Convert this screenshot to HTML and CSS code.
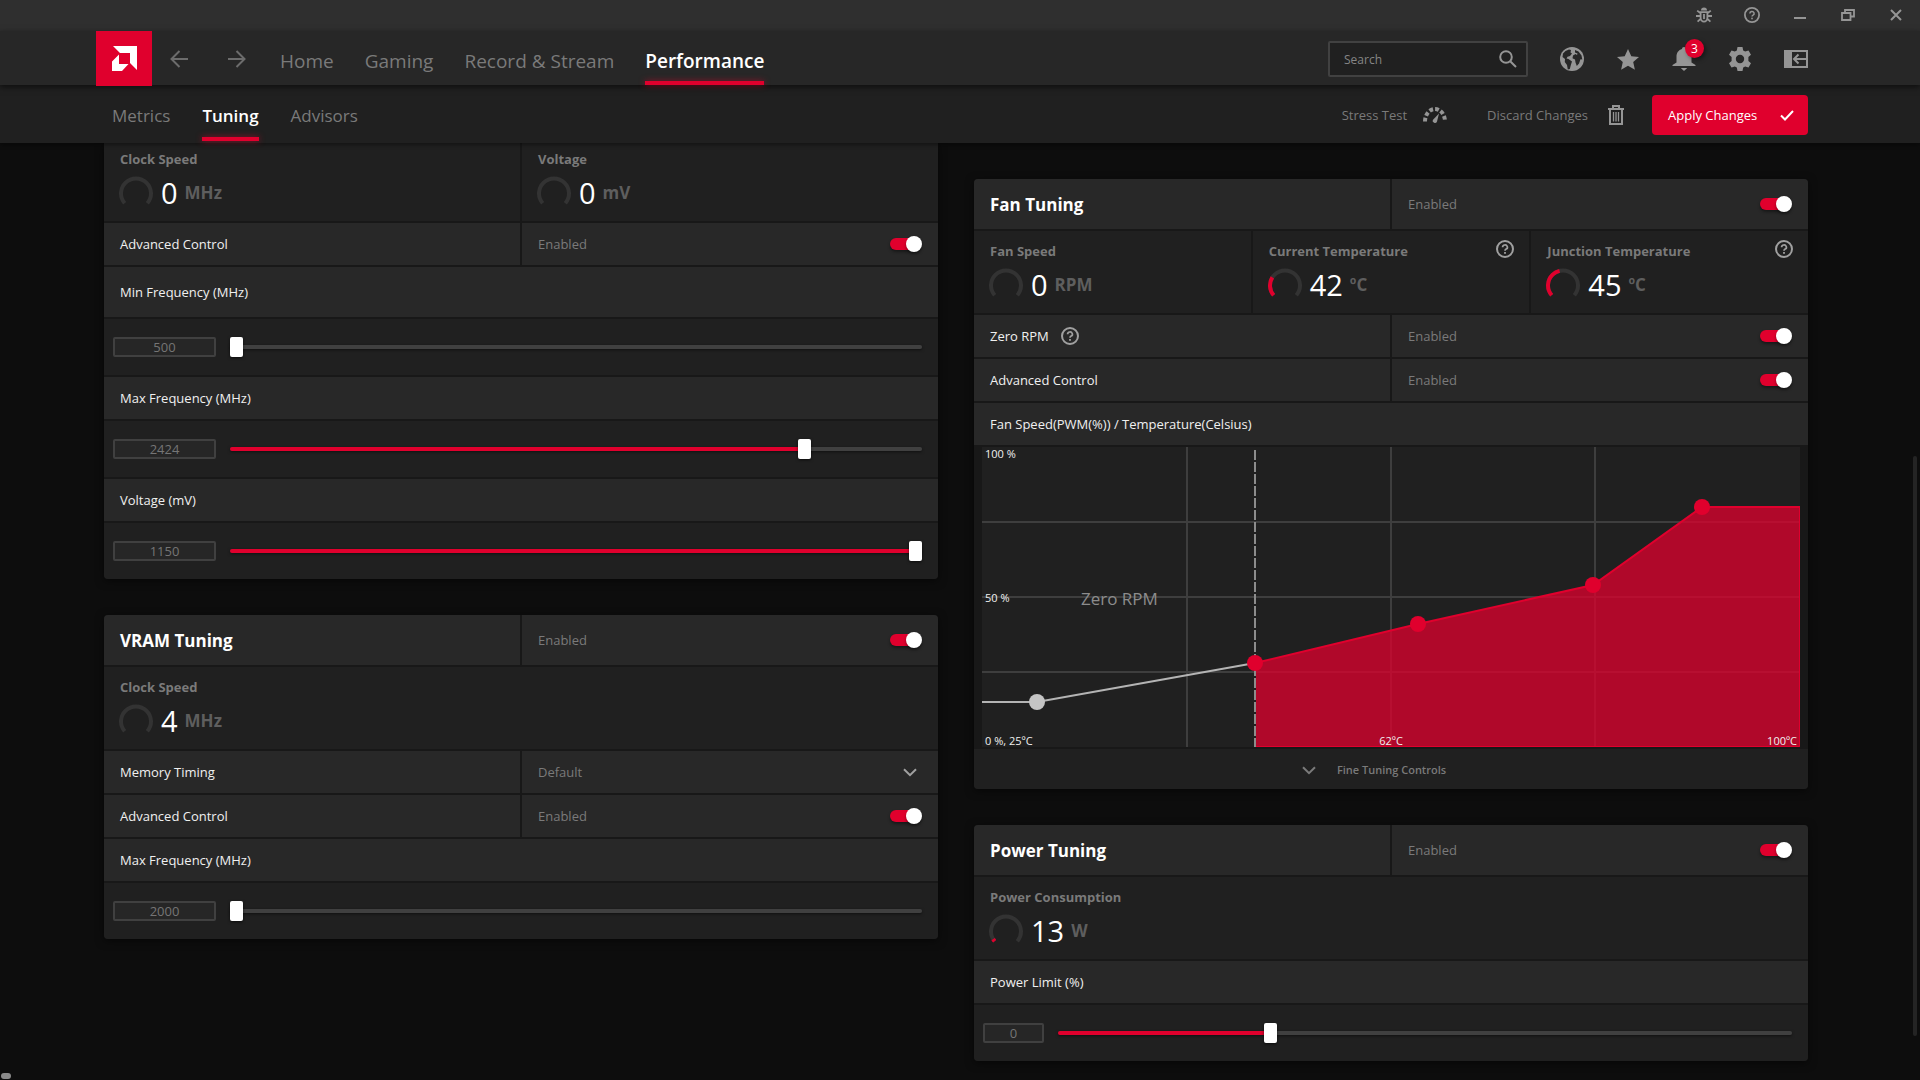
FILE: index.html
```html
<!DOCTYPE html>
<html lang="en">
<head>
<meta charset="utf-8">
<title>Performance Tuning</title>
<link rel="stylesheet" href="styles.css">
</head>
<body>
<svg class="defs" width="0" height="0" aria-hidden="true">
  <symbol id="help" viewBox="0 0 18 18"><circle cx="9" cy="9" r="8" fill="none" stroke="currentColor" stroke-width="2"/><path d="M6.600 7.200a2.400 2.200 0 1 1 3.600 1.900c-.9.5-1.200.8-1.200 1.700" fill="none" stroke="currentColor" stroke-width="1.700"/><rect x="8.100" y="12" width="1.800" height="1.800" fill="currentColor"/></symbol>
  <symbol id="chevron" viewBox="0 0 14 9"><path d="M1 1.200l6 6 6-6" fill="none" stroke="currentColor" stroke-width="2"/></symbol>
</svg>
<div class="app">
  <div class="titlebar">
    <button class="win-btn" aria-label="Report a bug"><svg width="16" height="16" viewBox="0 0 16 16" fill="none" stroke="currentColor" stroke-width="1.800"><path d="M5 3.400a3 3 0 0 1 6 0z" fill="currentColor" stroke="none"/><path d="M4.600 5.200h6.800v5.200a3.400 4.200 0 0 1-6.800 0zM8 7v5M4.600 9H0M16 9h-4.600M4.600 6.200L1.200 3.600M11.400 6.200l3.400-2.600M4.800 11.600L1.600 14.600M11.200 11.600l3.200 3"/></svg></button>
    <button class="win-btn" aria-label="Help"><svg width="16" height="16"><use href="#help"/></svg></button>
    <button class="win-btn" aria-label="Minimize"><svg width="14" height="14" viewBox="0 0 14 14"><path d="M1 10h12" stroke="currentColor" stroke-width="2"/></svg></button>
    <button class="win-btn" aria-label="Restore"><svg width="14" height="12" viewBox="0 0 14 12" fill="none" stroke="currentColor" stroke-width="1.800"><path d="M1 4h8.500v7H1zM4 4V1h9v6.500H9.500"/></svg></button>
    <button class="win-btn" aria-label="Close"><svg width="12" height="12" viewBox="0 0 12 12"><path d="M1 1l10 10M11 1L1 11" stroke="currentColor" stroke-width="2"/></svg></button>
  </div>

  <header class="header">
    <a class="logo" href="#" aria-label="AMD"><svg width="25" height="25" viewBox="0 0 25 25" fill="#fff"><path d="M1 0h24v24l-7-7V7H8z"/><path d="M7 8.500V18h9.500l-6.500 7H0V15.500z"/></svg></a>
    <div class="history">
      <button class="icon-btn" aria-label="Back"><svg width="18" height="18" viewBox="0 0 18 18" fill="none" stroke="currentColor" stroke-width="2"><path d="M18 9H2M9.500 1L1.500 9l8 8"/></svg></button>
      <button class="icon-btn" aria-label="Forward"><svg width="18" height="18" viewBox="0 0 18 18" fill="none" stroke="currentColor" stroke-width="2"><path d="M0 9h16M8.500 1l8 8-8 8"/></svg></button>
    </div>
    <nav class="nav nav-main">
      <a href="#">Home</a><a href="#">Gaming</a><a href="#">Record &amp; Stream</a><a href="#" class="active" aria-current="page">Performance</a>
    </nav>
    <div class="tools">
      <label class="search"><input type="text" placeholder="Search" aria-label="Search"><svg width="18" height="18" viewBox="0 0 18 18" fill="none" stroke="currentColor" stroke-width="2"><circle cx="7" cy="7" r="5.800"/><path d="M11.200 11.200L17 17"/></svg></label>
      <button class="tool" aria-label="Web"><svg width="24" height="24" viewBox="0 0 24 24"><circle cx="12" cy="12" r="12" fill="currentColor"/><g fill="#272727"><path d="M3 6.500L5.500 4l3.500-1.500 2 .5-.5 2.500 1.500 1-2 2.500-2.500.8-1 1.700 2 .5 3.500 2.500-1 3-1.200 4.500-2 .5-.8-4.500-2.200-3L5 12l-2.500-2z"/><path d="M15 3l3.500 1.500 3 4 .8 4-1.800-.3-1.500 4.300-2.200 2.500-1.300-3.500-.5-3-2.500-1.300.5-2.700 2.500-1.500 1.500 1 .5-1.500-2.500-1z"/></g></svg></button>
      <button class="tool" aria-label="Favorites"><svg width="24" height="24" viewBox="0 0 24 24" fill="currentColor"><path d="M12 2l3.300 7.200 7.700.8-5.800 5.100 1.700 7.700L12 18.800 5.100 22.800l1.700-7.700L1 10l7.700-.8z"/></svg></button>
      <button class="tool" aria-label="Notifications, 3 new"><svg width="24" height="24" viewBox="0 0 24 24" fill="currentColor"><path d="M12 0c-1.200 0-2 .8-2 2-3.500 1-5.500 4-5.500 7.500v6L.5 18v1h23v-1l-4-2.500v-6C19.500 6 17.500 3 14 2c0-1.200-.8-2-2-2zM8.800 21h6.400L12 24z"/></svg><span class="badge">3</span></button>
      <button class="tool" aria-label="Settings"><svg width="24" height="24" viewBox="0 0 24 24" fill="currentColor"><path fill-rule="evenodd" d="M9.500 0h5l.7 3.400 2 1.100 3.300-1.100L23 7.700l-2.600 2.400v3.800l2.600 2.400-2.500 4.300-3.300-1.100-2 1.100-.7 3.400h-5l-.7-3.400-2-1.100-3.300 1.100L1 16.300l2.600-2.400v-3.800L1 7.700l2.500-4.300 3.300 1.100 2-1.100zM12 7.800a4.200 4.200 0 1 0 0 8.400 4.200 4.200 0 0 0 0-8.400z"/></svg></button>
      <button class="tool" aria-label="Toggle sidebar"><svg width="24" height="18" viewBox="0 0 24 18"><path d="M0 0h8v18H0z" fill="currentColor"/><path d="M7 1h16v16H7M22 9H10M14.500 4.500L10 9l4.500 4.500" fill="none" stroke="currentColor" stroke-width="2"/></svg></button>
    </div>
  </header>

  <div class="subheader">
    <nav class="nav nav-sub">
      <a href="#">Metrics</a><a href="#" class="active" aria-current="page">Tuning</a><a href="#">Advisors</a>
    </nav>
    <div class="actions">
      <button class="action">Stress Test<svg width="24" height="18" viewBox="0 0 24 18"><path d="M2 15.500a10 12.500 0 0 1 20 0" fill="none" stroke="currentColor" stroke-width="4" stroke-dasharray="3.800 2.100"/><path d="M9.800 14L16 7.500 14 15.500a2.200 2.200 0 0 1-4.200-1.500z" fill="currentColor"/></svg></button>
      <button class="action">Discard Changes<svg width="16" height="20" viewBox="0 0 16 20" fill="none" stroke="currentColor"><path d="M0 4h16M5 3.500V1h6v2.500M2 4v15h12V4" stroke-width="2"/><path d="M5.500 7v9.500M8 7v9.500M10.500 7v9.500" stroke-width="1.300"/></svg></button>
      <button class="apply">Apply Changes<svg width="14" height="11" viewBox="0 0 14 11"><path d="M1 5.500l4 4L13 1" fill="none" stroke="currentColor" stroke-width="2"/></svg></button>
    </div>
  </div>

  <main class="content">
    <div class="column">
      <section class="card card-continued" aria-label="GPU">
        <div class="metrics">
          <div class="metric"><h3>Clock Speed</h3><div class="reading"><svg class="gauge" viewBox="0 0 34 30"><path d="M5.700 28.300a15 15 0 1 1 22.600 0" pathLength="100"/></svg><b>0</b><span>MHz</span></div></div>
          <div class="metric"><h3>Voltage</h3><div class="reading"><svg class="gauge" viewBox="0 0 34 30"><path d="M5.700 28.300a15 15 0 1 1 22.600 0" pathLength="100"/></svg><b>0</b><span>mV</span></div></div>
        </div>
        <div class="row split"><label class="cell" for="gpu-adv">Advanced Control</label><div class="cell state">Enabled<input id="gpu-adv" class="switch" type="checkbox" checked></div></div>
        <div class="row row-tall"><label class="cell" for="min-freq">Min Frequency (MHz)</label></div>
        <div class="slider"><input type="text" class="num" value="500" aria-label="Min Frequency value"><input id="min-freq" type="range" min="0" max="1000" value="0" style="--fill:0%"></div>
        <div class="row"><label class="cell" for="max-freq">Max Frequency (MHz)</label></div>
        <div class="slider"><input type="text" class="num" value="2424" aria-label="Max Frequency value"><input id="max-freq" type="range" min="0" max="1000" value="837" style="--fill:83%"></div>
        <div class="row"><label class="cell" for="volt">Voltage (mV)</label></div>
        <div class="slider"><input type="text" class="num" value="1150" aria-label="Voltage value"><input id="volt" type="range" min="0" max="1000" value="1000" style="--fill:100%"></div>
      </section>

      <section class="card" aria-labelledby="vram">
        <div class="row row-tall split"><h2 class="cell" id="vram">VRAM Tuning</h2><div class="cell state">Enabled<input class="switch" type="checkbox" checked aria-labelledby="vram"></div></div>
        <div class="metrics">
          <div class="metric"><h3>Clock Speed</h3><div class="reading"><svg class="gauge" viewBox="0 0 34 30"><path d="M5.700 28.300a15 15 0 1 1 22.600 0" pathLength="100"/></svg><b>4</b><span>MHz</span></div></div>
        </div>
        <div class="row split"><label class="cell" for="timing">Memory Timing</label><div class="cell state"><select id="timing"><option>Default</option></select><svg class="chevron" width="14" height="9"><use href="#chevron"/></svg></div></div>
        <div class="row split"><label class="cell" for="vram-adv">Advanced Control</label><div class="cell state">Enabled<input id="vram-adv" class="switch" type="checkbox" checked></div></div>
        <div class="row"><label class="cell" for="vram-freq">Max Frequency (MHz)</label></div>
        <div class="slider"><input type="text" class="num" value="2000" aria-label="VRAM Max Frequency value"><input id="vram-freq" type="range" min="0" max="1000" value="0" style="--fill:0%"></div>
      </section>
    </div>

    <div class="column column-right">
      <section class="card" aria-labelledby="fan">
        <div class="row row-tall split"><h2 class="cell" id="fan">Fan Tuning</h2><div class="cell state">Enabled<input class="switch" type="checkbox" checked aria-labelledby="fan"></div></div>
        <div class="metrics">
          <div class="metric"><h3>Fan Speed</h3><div class="reading"><svg class="gauge" viewBox="0 0 34 30"><path d="M5.700 28.300a15 15 0 1 1 22.600 0" pathLength="100"/></svg><b>0</b><span>RPM</span></div></div>
          <div class="metric"><h3>Current Temperature<button class="help" aria-label="About current temperature"><svg width="18" height="18"><use href="#help"/></svg></button></h3><div class="reading"><svg class="gauge" viewBox="0 0 34 30"><path d="M5.700 28.300a15 15 0 1 1 22.600 0" pathLength="100"/><path class="level" d="M5.700 28.300a15 15 0 1 1 22.600 0" pathLength="100" stroke-dasharray="28 100"/></svg><b>42</b><span>ºC</span></div></div>
          <div class="metric"><h3>Junction Temperature<button class="help" aria-label="About junction temperature"><svg width="18" height="18"><use href="#help"/></svg></button></h3><div class="reading"><svg class="gauge" viewBox="0 0 34 30"><path d="M5.700 28.300a15 15 0 1 1 22.600 0" pathLength="100"/><path class="level" d="M5.700 28.300a15 15 0 1 1 22.600 0" pathLength="100" stroke-dasharray="45 100"/></svg><b>45</b><span>ºC</span></div></div>
        </div>
        <div class="row split"><div class="cell"><label for="zero">Zero RPM</label><button class="help" aria-label="About Zero RPM"><svg width="18" height="18"><use href="#help"/></svg></button></div><div class="cell state">Enabled<input id="zero" class="switch" type="checkbox" checked></div></div>
        <div class="row split"><label class="cell" for="fan-adv">Advanced Control</label><div class="cell state">Enabled<input id="fan-adv" class="switch" type="checkbox" checked></div></div>
        <div class="row"><div class="cell">Fan Speed(PWM(%)) / Temperature(Celsius)</div></div>
        <div class="chart">
          <svg viewBox="0 0 818 300" role="img" aria-label="Fan speed curve">
            <rect width="818" height="300" fill="#202020"/>
            <path d="M0 75h818M0 150h818M0 225h818M205 0v300M409 0v300M613 0v300" stroke="#3e3e3e" stroke-width="2"/>
            <path d="M273 3v297" stroke="#8c8c8c" stroke-width="2" stroke-dasharray="10 2"/>
            <path d="M0 255h55L273 216" fill="none" stroke="#b4b4b4" stroke-width="2"/>
            <path d="M274 216L436 177L611 138L720 60H818V300H274z" fill="#e0002d" fill-opacity=".75"/>
            <path d="M273 216L436 177L611 138L720 60H818" fill="none" stroke="#e0002d" stroke-width="2"/>
            <path d="M274 299.500H817.500V60" fill="none" stroke="#e0002d"/>
            <circle cx="55" cy="255" r="8" fill="#c4c4c4"/>
            <g fill="#e0002d"><circle cx="273" cy="216" r="8"/><circle cx="436" cy="177" r="8"/><circle cx="611" cy="138" r="8"/><circle cx="720" cy="60" r="8"/></g>
            <text class="zone" x="99" y="158">Zero RPM</text>
            <g class="axis"><text x="3" y="11">100 %</text><text x="3" y="155">50 %</text><text x="3" y="298">0 %, 25ºC</text><text x="409" y="298" text-anchor="middle">62ºC</text><text x="815" y="298" text-anchor="end">100ºC</text></g>
          </svg>
        </div>
        <button class="fine"><svg width="14" height="9"><use href="#chevron"/></svg>Fine Tuning Controls</button>
      </section>

      <section class="card" aria-labelledby="power">
        <div class="row row-tall split"><h2 class="cell" id="power">Power Tuning</h2><div class="cell state">Enabled<input class="switch" type="checkbox" checked aria-labelledby="power"></div></div>
        <div class="metrics">
          <div class="metric"><h3>Power Consumption</h3><div class="reading"><svg class="gauge" viewBox="0 0 34 30"><path d="M5.700 28.300a15 15 0 1 1 22.600 0" pathLength="100"/><path class="level" d="M5.700 28.300a15 15 0 1 1 22.600 0" pathLength="100" stroke-dasharray="4 100"/></svg><b>13</b><span>W</span></div></div>
        </div>
        <div class="row"><label class="cell" for="limit">Power Limit (%)</label></div>
        <div class="slider slider-short"><input type="text" class="num" value="0" aria-label="Power Limit value"><input id="limit" type="range" min="0" max="1000" value="286" style="--fill:29%"></div>
      </section>
    </div>
  </main>
  <div class="scroll-y"></div>
  <div class="scroll-x"></div>
</div>
</body>
</html>
```
FILE: styles.css
```css
:root {
  --red: #e0002d;
  --panel: #202020;
  --row: #282828;
  --line: #181818;
  --muted: #7a7a7a;
  --icon: #959595;
}
* { box-sizing: border-box; }
body {
  margin: 0;
  background: #0d0d0d;
  color: #f0f0f0;
  font: 14px/20px "Open Sans", "Noto Sans", sans-serif;
}
a { color: inherit; text-decoration: none; }
button, input, select { font: inherit; color: inherit; }
button { padding: 0; border: 0; background: none; display: flex; align-items: center; justify-content: center; }
h2, h3 { margin: 0; }
svg { display: block; flex: none; }
.defs { position: absolute; }

.app { position: relative; height: 100vh; overflow: hidden; display: flex; flex-direction: column; }

.titlebar { flex: none; height: 31px; padding-bottom: 1px; display: flex; justify-content: flex-end; background: #2f2f2f; color: var(--icon); }
.win-btn { width: 48px; }

.header {
  position: relative;
  z-index: 3;
  flex: none;
  height: 54px;
  padding: 0 112px 0 96px;
  display: flex;
  background: #272727;
  box-shadow: 0 2px 6px #0009;
}
.logo { width: 56px; height: 55px; flex: none; display: grid; place-items: center; background: var(--red); }
.history { display: flex; gap: 40px; margin: 0 34px 0 18px; padding-top: 2px; color: #6c6c6c; }
.icon-btn { width: 18px; }
.nav { display: flex; color: var(--muted); }
.nav a { position: relative; display: flex; align-items: center; }
.nav .active { color: #fff; font-weight: 600; }
.nav .active::after { content: ""; position: absolute; left: 0; right: 0; bottom: 0; height: 4px; background: var(--red); box-shadow: 0 0 6px #e0002d99; }
.nav-main { gap: 31px; font-size: 19px; }
.nav-main a { padding-top: 6px; }

.tools { margin-left: auto; padding-top: 2px; display: flex; align-items: center; color: var(--icon); }
.search { width: 200px; height: 36px; margin-right: 16px; padding: 0 9px 0 14px; display: flex; align-items: center; border: 2px solid #414141; border-radius: 2px; background: #202020; }
.search input { flex: 1; min-width: 0; padding: 2px 0 0; border: 0; outline: 0; background: none; font-size: 12px; }
.search input::placeholder { color: #858585; opacity: 1; }
.tool { position: relative; width: 24px; height: 24px; margin-left: 32px; }
.search + .tool { margin-left: 16px; }
.badge { position: absolute; left: 13px; top: -8px; width: 19px; height: 19px; border-radius: 50%; background: var(--red); color: #fff; font-size: 12px; line-height: 19px; text-align: center; box-shadow: 2px 2px 4px #0006; }

.subheader { position: relative; z-index: 2; flex: none; height: 58px; padding: 0 112px; display: flex; background: #202020; box-shadow: 0 2px 4px #0006; }
.nav-sub { height: 56px; gap: 32px; font-size: 17px; }
.nav-sub a { padding-top: 6px; }
.actions { margin-left: auto; padding-top: 2px; display: flex; align-items: center; color: var(--icon); font-size: 13px; }
.action { gap: 16px; margin-right: 40px; color: var(--muted); }
.action svg { color: var(--icon); }
.action + .action { gap: 20px; margin-right: 28px; }
.apply { width: 156px; height: 40px; padding: 0 14px 0 16px; justify-content: space-between; border-radius: 4px; background: var(--red); color: #fff; }

.content { flex: 1; min-height: 0; padding: 0 112px 0 104px; display: grid; grid-template-columns: 1fr 1fr; gap: 36px; }
.column { display: flex; flex-direction: column; gap: 36px; }
.column-right { padding-top: 36px; }

.card { display: flex; flex-direction: column; gap: 2px; background: var(--line); border-radius: 4px; overflow: hidden; flex: none; box-shadow: 0 2px 8px #0008; }
.card-continued { border-top-left-radius: 0; border-top-right-radius: 0; }
.row { display: grid; height: 42px; gap: 2px; }
.row-tall { height: 50px; }
.split { grid-template-columns: 1fr 1fr; }
.cell { display: flex; align-items: center; padding: 0 16px; background: var(--row); font-size: 13px; }
h2.cell { padding-top: 2px; font-size: 17px; font-weight: 700; color: #fff; }
.state { position: relative; justify-content: space-between; color: var(--muted); }
.help { color: #a0a0a0; }
.cell .help { margin-left: 12px; }

.switch { appearance: none; position: relative; width: 32px; height: 16px; margin: 0; }
.switch::before { content: ""; position: absolute; left: 0; right: 2px; top: 2px; height: 12px; border-radius: 6px; background: var(--red); box-shadow: 0 2px 3px #0006; }
.switch::after { content: ""; position: absolute; right: 0; top: 0; width: 16px; height: 16px; border-radius: 50%; background: #fff; box-shadow: 0 2px 3px #0006; }

.state select { appearance: none; flex: 1; padding: 0; border: 0; outline: 0; background: none; }
.chevron { margin-right: 5px; color: #a0a0a0; }

.metrics { display: grid; grid-auto-flow: column; grid-auto-columns: 1fr; gap: 2px; height: 82px; }
.card-continued .metrics { height: 78px; }
.metric { padding: 10px 15px 0 16px; background: var(--panel); }
.card-continued .metric { padding-top: 6px; }
.metric h3 { display: flex; justify-content: space-between; height: 20px; font-size: 13px; font-weight: 700; color: var(--muted); }
.metric .help { height: 16px; }
.reading { display: flex; align-items: center; margin-top: 4px; }
.gauge { width: 34px; height: 30px; margin-left: -1px; align-self: flex-start; margin-top: 2px; fill: none; stroke: #333; stroke-width: 4; }
.gauge .level { stroke: var(--red); }
.reading b { margin-left: 8px; font-size: 29px; line-height: 40px; font-weight: 400; color: #fff; }
.reading span { margin-left: 7px; font-size: 17px; font-weight: 700; color: #5e5e5e; }

.slider { display: flex; align-items: center; gap: 14px; height: 56px; padding: 0 16px 0 9px; background: var(--panel); }
.num { width: 103px; height: 20px; padding: 0; border: 2px solid #404040; border-radius: 2px; outline: 0; background: #262626; color: #757575; font-size: 13px; text-align: center; }
.slider-short .num { width: 61px; }
input[type="range"] { appearance: none; flex: 1; min-width: 0; height: 20px; margin: 0; background: none; }
input[type="range"]::-webkit-slider-runnable-track { height: 4px; border-radius: 2px; background: linear-gradient(to right, var(--red) var(--fill), #404040 var(--fill)); box-shadow: 0 1px 3px #0008; }
input[type="range"]::-webkit-slider-thumb { appearance: none; width: 13px; height: 20px; margin-top: -8px; border-radius: 2px; background: #fff; box-shadow: 0 1px 3px #000a; }

.chart { padding: 0 8px; }
.chart svg { width: 100%; height: auto; }
.zone { fill: #8c8c8c; font-size: 17px; }
.axis { fill: #f0f0f0; font-size: 11px; }
.fine { height: 40px; padding: 2px 34px 0 0; gap: 21px; background: var(--panel); color: var(--muted); font-size: 11px; font-weight: 600; }

.scroll-y { position: absolute; right: 3px; top: 456px; bottom: 44px; width: 4px; border-radius: 2px; background: #242424; }
.scroll-x { position: absolute; left: 1px; bottom: 1px; width: 10px; height: 6px; border-radius: 3px; background: #8a8a8a; }
```
